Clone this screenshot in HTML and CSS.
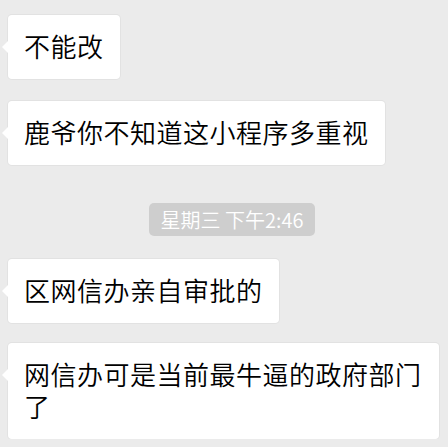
FILE: index.html
```html
<!DOCTYPE html>
<html lang="zh-CN">
<head>
<meta charset="utf-8">
<link rel="stylesheet" href="styles.css">
</head>
<body>
<div class="chat">
  <div class="row"><div class="bubble">不能改</div></div>
  <div class="row gap-s"><div class="bubble">鹿爷你不知道这小程序多重视</div></div>
  <div class="time-row"><span class="time">星期三 下午2:46</span></div>
  <div class="row"><div class="bubble">区网信办亲自审批的</div></div>
  <div class="row gap-xs"><div class="bubble">网信办可是当前最牛逼的政府部门了</div></div>
</div>
</body>
</html>
```
FILE: styles.css
```css
html, body {
  margin: 0;
  padding: 0;
  background: #ebebeb;
}
body {
  font-family: "Noto Sans CJK SC", "Noto Sans", sans-serif;
  color: #000;
}
.chat {
  display: flex;
  flex-direction: column;
  padding: 15px 0 0 8px;
}
.row {
  display: flex;
}
.gap-s {
  margin-top: 22px;
}
.gap-xs {
  margin-top: 20px;
}
.bubble {
  position: relative;
  background: #fff;
  border-radius: 4px;
  box-shadow: 0 0 0 1px #e2e2e2;
  max-width: 431px;
  box-sizing: border-box;
  padding: 15px 16px 17px 16px;
  font-size: 26px;
  font-weight: 350;
  letter-spacing: 0.5px;
  line-height: 32px;
}
.bubble::before {
  content: "";
  position: absolute;
  left: -6px;
  top: 26px;
  width: 0;
  height: 0;
  border-top: 6px solid transparent;
  border-bottom: 6px solid transparent;
  border-right: 6px solid #fff;
}
.time-row {
  display: flex;
  justify-content: center;
  padding-left: 8px;
  margin: 38px 0 23px;
}
.time {
  background: #cecece;
  color: #fff;
  border-radius: 5px;
  font-size: 20px;
  font-weight: 350;
  line-height: 33px;
  padding: 0 12px;
}
```
